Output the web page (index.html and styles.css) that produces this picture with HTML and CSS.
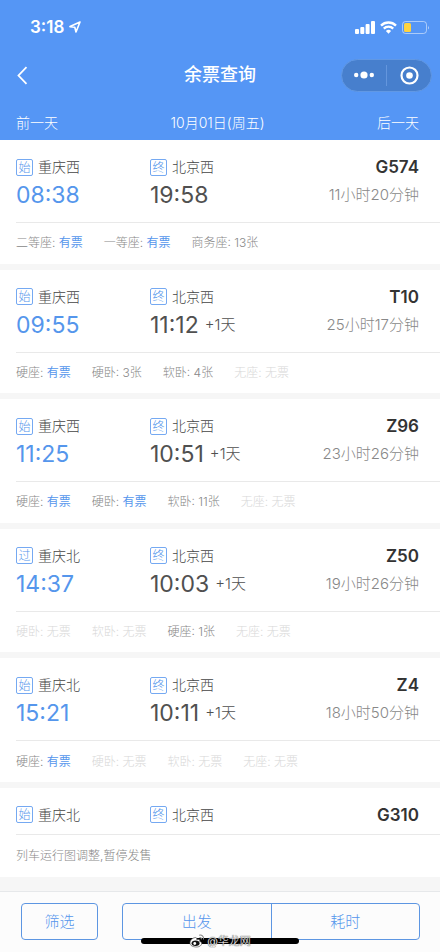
FILE: index.html
```html
<!DOCTYPE html>
<html lang="zh-CN">
<head>
<meta charset="utf-8">
<meta name="viewport" content="width=device-width, initial-scale=1">
<title>余票查询</title>
<link rel="stylesheet" href="styles.css">
</head>
<body>
<header class="top">
  <div class="status">
    <div class="clock">3:18
      <svg width="12" height="12" viewBox="0 0 12 12" fill="none" stroke="currentColor" stroke-width="1.6" stroke-linejoin="round"><path d="M11 1 1 5.600l4.800.7L7 11z"/></svg>
    </div>
    <div class="signals">
      <svg width="20" height="13" viewBox="0 0 20 13" fill="currentColor"><rect x="0" y="8" width="4" height="5" rx="1"/><rect x="5.3" y="6" width="4" height="7" rx="1"/><rect x="10.6" y="3" width="4" height="10" rx="1"/><rect x="16" y="0" width="4" height="13" rx="1"/></svg>
      <svg width="17" height="13" viewBox="0 0 17 13" fill="none" stroke="currentColor" stroke-width="2.3"><path d="M1 4.6a10.6 10.6 0 0 1 15 0M3.8 7.6a6.6 6.6 0 0 1 9.4 0"/><path d="M8.500 12.700 5.900 10a3.700 3.700 0 0 1 5.200 0z" fill="currentColor" stroke="none"/></svg>
      <svg width="28" height="13" viewBox="0 0 28 13"><rect x=".5" y=".5" width="24" height="12" rx="3" fill="none" stroke="#fff" stroke-opacity=".5"/><rect x="2" y="2" width="7" height="9" rx="1.500" fill="#ffd33f"/><path d="M26 4.500q1.700 2 0 4z" fill="#fff" fill-opacity=".6"/></svg>
    </div>
  </div>
  <div class="nav">
    <button class="back" aria-label="返回"><svg width="11" height="19" viewBox="0 0 11 19" fill="none" stroke="currentColor" stroke-width="1.8"><path d="M9.500 1.200 1.500 9.500l8 8.300"/></svg></button>
    <h1>余票查询</h1>
    <div class="capsule">
      <button aria-label="更多"><svg width="20" height="8" viewBox="0 0 20 8" fill="currentColor"><circle cx="2.200" cy="4" r="2.200"/><circle cx="10" cy="4" r="3.600"/><circle cx="17.800" cy="4" r="2.200"/></svg></button>
      <button aria-label="关闭"><svg width="19" height="19" viewBox="0 0 19 19"><circle cx="9.500" cy="9.500" r="8" fill="none" stroke="currentColor" stroke-width="2.200"/><circle cx="9.500" cy="9.500" r="3.300" fill="currentColor"/></svg></button>
    </div>
  </div>
  <div class="days"><button>前一天</button><span>10月01日(周五)</span><button>后一天</button></div>
</header>

<main class="list">
  <article class="train">
    <div class="trip">
      <div><p class="station"><i>始</i>重庆西</p><p class="time depart">08:38</p></div>
      <div><p class="station"><i>终</i>北京西</p><p class="time">19:58</p></div>
      <div class="info"><h2>G574</h2><p class="duration">11小时20分钟</p></div>
    </div>
    <div class="seats"><span>二等座: <b>有票</b></span><span>一等座: <b>有票</b></span><span>商务座: 13张</span></div>
  </article>
  <article class="train">
    <div class="trip">
      <div><p class="station"><i>始</i>重庆西</p><p class="time depart">09:55</p></div>
      <div><p class="station"><i>终</i>北京西</p><p class="time">11:12<small>+1天</small></p></div>
      <div class="info"><h2>T10</h2><p class="duration">25小时17分钟</p></div>
    </div>
    <div class="seats"><span>硬座: <b>有票</b></span><span>硬卧: 3张</span><span>软卧: 4张</span><span class="none">无座: 无票</span></div>
  </article>
  <article class="train">
    <div class="trip">
      <div><p class="station"><i>始</i>重庆西</p><p class="time depart">11:25</p></div>
      <div><p class="station"><i>终</i>北京西</p><p class="time">10:51<small>+1天</small></p></div>
      <div class="info"><h2>Z96</h2><p class="duration">23小时26分钟</p></div>
    </div>
    <div class="seats"><span>硬座: <b>有票</b></span><span>硬卧: <b>有票</b></span><span>软卧: 11张</span><span class="none">无座: 无票</span></div>
  </article>
  <article class="train">
    <div class="trip">
      <div><p class="station"><i>过</i>重庆北</p><p class="time depart">14:37</p></div>
      <div><p class="station"><i>终</i>北京西</p><p class="time">10:03<small>+1天</small></p></div>
      <div class="info"><h2>Z50</h2><p class="duration">19小时26分钟</p></div>
    </div>
    <div class="seats"><span class="none">硬卧: 无票</span><span class="none">软卧: 无票</span><span>硬座: 1张</span><span class="none">无座: 无票</span></div>
  </article>
  <article class="train">
    <div class="trip">
      <div><p class="station"><i>始</i>重庆北</p><p class="time depart">15:21</p></div>
      <div><p class="station"><i>终</i>北京西</p><p class="time">10:11<small>+1天</small></p></div>
      <div class="info"><h2>Z4</h2><p class="duration">18小时50分钟</p></div>
    </div>
    <div class="seats"><span>硬座: <b>有票</b></span><span class="none">硬卧: 无票</span><span class="none">软卧: 无票</span><span class="none">无座: 无票</span></div>
  </article>
  <article class="train suspended">
    <div class="trip">
      <div><p class="station"><i>始</i>重庆北</p></div>
      <div><p class="station"><i>终</i>北京西</p></div>
      <div class="info"><h2>G310</h2></div>
    </div>
    <div class="seats"><span>列车运行图调整,暂停发售</span></div>
  </article>
</main>

<footer class="tools">
  <button class="filter">筛选</button>
  <div class="sort"><button>出发</button><button>耗时</button></div>
  <div class="home"></div>
  <div class="mark">
    <svg width="16" height="14" viewBox="0 0 16 14"><path d="M6 3.500C3 4 .8 6.500.8 9c0 5 11.700 5.600 11.700.4 0-1.200-1-1.700-2-2 .6-2-1-2.400-2.900-1.600C8 4.300 7.300 3.300 6 3.500z" fill="#fff" stroke="#555" stroke-width=".7"/><ellipse cx="6.400" cy="9.200" rx="4" ry="2.700" fill="#111"/><circle cx="5.600" cy="9.500" r="1.400" fill="#fff"/><path d="M10 1.200c3-.7 5 1.700 4.300 4.300M10.300 3.500c1.400-.2 2.200.7 1.900 1.900" fill="none" stroke="#888" stroke-width="1.100"/></svg>
    <span>@华龙网</span>
  </div>
</footer>
</body>
</html>
```
FILE: styles.css
```css
* { box-sizing: border-box; margin: 0; padding: 0; }

body {
  display: flex;
  flex-direction: column;
  min-height: 100vh;
  background: #f6f6f6;
  color: #444;
  font: 300 14px/20px Inter, "Noto Sans CJK SC", sans-serif;
}

button { border: 0; background: none; color: inherit; font: inherit; }
svg { display: block; }

.top { background: #5596f5; color: #fff; }

.status {
  display: flex;
  align-items: center;
  justify-content: space-between;
  height: 54px;
  padding: 0 10px 0 30px;
}
.clock { display: flex; align-items: center; gap: 5px; font-size: 17px; font-weight: 600; }
.signals { display: flex; gap: 5px; }

.nav {
  display: grid;
  grid-template-columns: 1fr auto 1fr;
  align-items: center;
  height: 42px;
  padding: 0 8px;
}
.back { justify-self: start; padding: 0 9px; }
h1 { font-size: 18px; font-weight: 500; line-height: 22px; }
.capsule {
  display: flex;
  justify-self: end;
  align-items: center;
  width: 91px;
  height: 33px;
  border: 1px solid #6198e4;
  border-radius: 17px;
  background: #477fcd;
}
.capsule button { display: flex; flex: 1; align-items: center; justify-content: center; height: 21px; }
.capsule button + button { border-left: 1px solid #6496dd; }

.days {
  display: grid;
  grid-template-columns: 1fr auto 1fr;
  align-items: center;
  height: 44px;
  padding: 10px 21px 0 16px;
}
.days button:first-child { justify-self: start; }
.days button:last-child { justify-self: end; }

.list { display: flex; flex: 1; flex-direction: column; padding-bottom: 14px; }
.train {
  display: flex;
  flex: 1 0 auto;
  flex-direction: column;
  padding-left: 16px;
  border-bottom: 6px solid #f6f6f6;
  background: #fff;
}
.trip {
  display: grid;
  grid-template-columns: 134px 1fr auto;
  padding: 17px 21px 9px 0;
  border-bottom: 1px solid #e9e9e9;
}
.station { display: flex; align-items: center; gap: 5px; height: 20px; }
.station i {
  width: 17px;
  height: 17px;
  border: 1px solid #75a9f2;
  border-radius: 2px;
  color: #5596ec;
  font-size: 12px;
  font-style: normal;
  line-height: 15px;
  text-align: center;
}
.time { display: flex; align-items: center; gap: 6px; height: 36px; color: #505050; font-size: 23px; font-weight: 400; }
.time.depart { color: #5596ec; }
.time small { font-size: 15px; font-weight: 300; }
.info { text-align: right; }
h2 { color: #333; font-size: 17px; font-weight: 600; line-height: 20px; }
.duration { color: #888; font-size: 15px; line-height: 36px; }
.seats {
  display: flex;
  flex: 1;
  align-items: center;
  gap: 21px;
  min-height: 40px;
  color: #888;
  font-size: 12px;
}
.seats b { color: #5596ec; font-weight: 400; }
.seats .none { color: #d8d8d8; }

.suspended { flex: none; border-bottom: 0; }
.suspended .seats { min-height: 42px; }

.tools {
  position: relative;
  display: flex;
  gap: 24px;
  padding: 11px 20px 12px 21px;
  border-top: 1px solid #e6e8ea;
  background: #fcfcfc;
  color: #5596ec;
  font-size: 15px;
}
.filter { flex: 0 0 77px; height: 37px; border: 1px solid #5d96e2; border-radius: 4px; }
.sort { display: flex; flex: 1; height: 37px; border: 1px solid #5d96e2; border-radius: 4px; }
.sort button { flex: 1; }
.sort button + button { border-left: 1px solid #5d96e2; }

.home {
  position: absolute;
  bottom: 8px;
  left: 50%;
  width: 158px;
  height: 6px;
  border-radius: 3px;
  background: #000;
  transform: translateX(-50%);
}
.mark {
  position: absolute;
  bottom: 3px;
  left: 50%;
  display: flex;
  align-items: center;
  gap: 2px;
  color: #fff;
  font-size: 11px;
  line-height: 16px;
  text-shadow: 0 0 1px #333, 0 0 1px #333;
  white-space: nowrap;
  transform: translateX(-50%);
}
```
